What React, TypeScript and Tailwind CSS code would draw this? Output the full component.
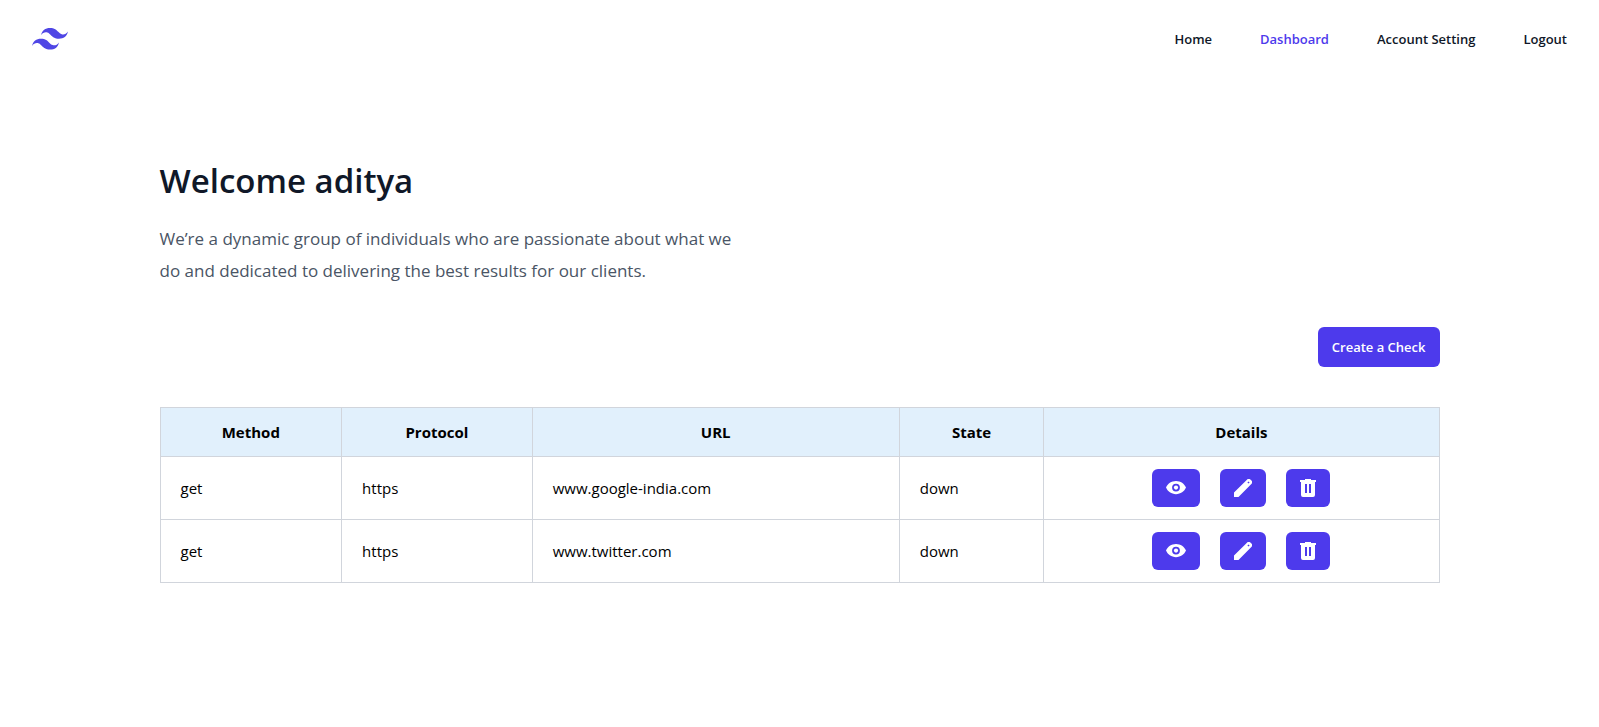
const navLinks = [
  { label: "Home", active: false },
  { label: "Dashboard", active: true },
  { label: "Account Setting", active: false },
];

const columns = [
  { label: "Method", width: "w-[14.2%]" },
  { label: "Protocol", width: "w-[14.9%]" },
  { label: "URL", width: "w-[28.7%]" },
  { label: "State", width: "w-[11.3%]" },
  { label: "Details", width: "w-[30.9%]" },
];

const checks = [
  { method: "get", protocol: "https", url: "www.google-india.com", state: "down" },
  { method: "get", protocol: "https", url: "www.twitter.com", state: "down" },
];

function Logo() {
  return (
    <svg className="w-9" viewBox="0 0 54 33" fill="#4f46e5" aria-hidden="true">
      <path
        fillRule="evenodd"
        clipRule="evenodd"
        d="M27 0c-7.2 0-11.7 3.6-13.5 10.8 2.7-3.6 5.85-4.95 9.45-4.05 2.054.513 3.522 2.004 5.147 3.653C30.744 13.09 33.808 16.2 40.5 16.2c7.2 0 11.7-3.6 13.5-10.8-2.7 3.6-5.85 4.95-9.45 4.05-2.054-.513-3.522-2.004-5.147-3.653C36.756 3.11 33.692 0 27 0zM13.5 16.2C6.3 16.2 1.8 19.8 0 27c2.7-3.6 5.85-4.95 9.45-4.05 2.054.514 3.522 2.004 5.147 3.653C17.244 29.29 20.308 32.4 27 32.4c7.2 0 11.7-3.6 13.5-10.8-2.7 3.6-5.85 4.95-9.45 4.05-2.054-.513-3.522-2.004-5.147-3.653C23.256 19.31 20.192 16.2 13.5 16.2z"
      />
    </svg>
  );
}

function EyeIcon() {
  return (
    <svg className="h-[18px] w-5" viewBox="0 0 20 18" fill="currentColor" aria-hidden="true">
      <path
        fillRule="evenodd"
        d="M10 2C5.400 2 1.600 4.800 0 8.600c1.600 3.800 5.400 6.600 10 6.600s8.400-2.800 10-6.600C18.400 4.800 14.600 2 10 2zm0 2.700a3.900 3.900 0 1 1 0 7.800 3.900 3.900 0 0 1 0-7.800z"
      />
      <circle cx="10" cy="8.6" r="2.1" />
    </svg>
  );
}

function PencilIcon() {
  return (
    <svg className="h-[18px] w-[18px]" viewBox="0 0 18 18" fill="currentColor" aria-hidden="true">
      <path
        fillRule="evenodd"
        d="M0 18v-4.500L12.700.9a3 3 0 0 1 4.300.1 3 3 0 0 1 .1 4.300L4.500 18zM14.500 2.400 13.400 3.500l1.100 1.100 1.100-1.100z"
      />
    </svg>
  );
}

function TrashIcon() {
  return (
    <svg className="h-[18px] w-4" viewBox="0 0 16 18" fill="currentColor" aria-hidden="true">
      <path
        fillRule="evenodd"
        d="M5 0h6v1h5v2h-1v13a2 2 0 0 1-2 2H3a2 2 0 0 1-2-2V3H0V1h5zm0 5v9h2V5zm4 0v9h2V5z"
      />
    </svg>
  );
}

const actions = [
  { label: "View check", Icon: EyeIcon },
  { label: "Edit check", Icon: PencilIcon },
  { label: "Delete check", Icon: TrashIcon },
];

export default function App() {
  return (
    <div className="min-h-screen bg-white font-['Open_Sans',sans-serif]">
      <header>
        <nav className="flex items-center justify-between px-8 pt-[27px] pb-6" aria-label="Global">
          <a href="#" aria-label="Company home">
            <Logo />
          </a>
          <div className="flex items-center gap-12 text-[13px] leading-6 font-semibold text-gray-900">
            {navLinks.map(({ label, active }) => (
              <a key={label} href="#" className={active ? "text-[#4d3aec]" : ""}>
                {label}
              </a>
            ))}
            <button type="button">Logout</button>
          </div>
        </nav>
      </header>

      <main className="mx-auto max-w-7xl pt-[79px] pb-16">
        <h1 className="text-[33px] leading-[54px] font-semibold text-gray-900">Welcome aditya</h1>
        <p className="mt-[15px] max-w-[580px] text-[17px] leading-8 text-gray-600">
          We’re a dynamic group of individuals who are passionate about what we do and dedicated to
          delivering the best results for our clients.
        </p>

        <div className="mt-10 flex justify-end">
          <button
            type="button"
            className="rounded-md bg-[#4d3aec] px-[14px] py-2 text-[13px] leading-6 font-semibold text-white"
          >
            Create a Check
          </button>
        </div>

        <table className="mt-10 w-full table-fixed border-collapse border border-gray-300 text-[15px] leading-6 text-black">
          <thead className="bg-[#e1f0fc]">
            <tr>
              {columns.map(({ label, width }) => (
                <th key={label} className={`${width} border border-gray-300 px-5 py-3 font-bold`}>
                  {label}
                </th>
              ))}
            </tr>
          </thead>
          <tbody>
            {checks.map((check) => (
              <tr key={check.url}>
                <td className="border border-gray-300 px-5 py-3">{check.method}</td>
                <td className="border border-gray-300 px-5 py-3">{check.protocol}</td>
                <td className="border border-gray-300 px-5 py-3">{check.url}</td>
                <td className="border border-gray-300 px-5 py-3">{check.state}</td>
                <td className="border border-gray-300 px-5 py-3">
                  <div className="flex justify-center gap-5">
                    {actions.map(({ label, Icon }) => (
                      <button
                        key={label}
                        type="button"
                        aria-label={label}
                        className="rounded-md bg-[#4d3aec] px-[14px] py-[10px] text-white"
                      >
                        <Icon />
                      </button>
                    ))}
                  </div>
                </td>
              </tr>
            ))}
          </tbody>
        </table>
      </main>
    </div>
  );
}
